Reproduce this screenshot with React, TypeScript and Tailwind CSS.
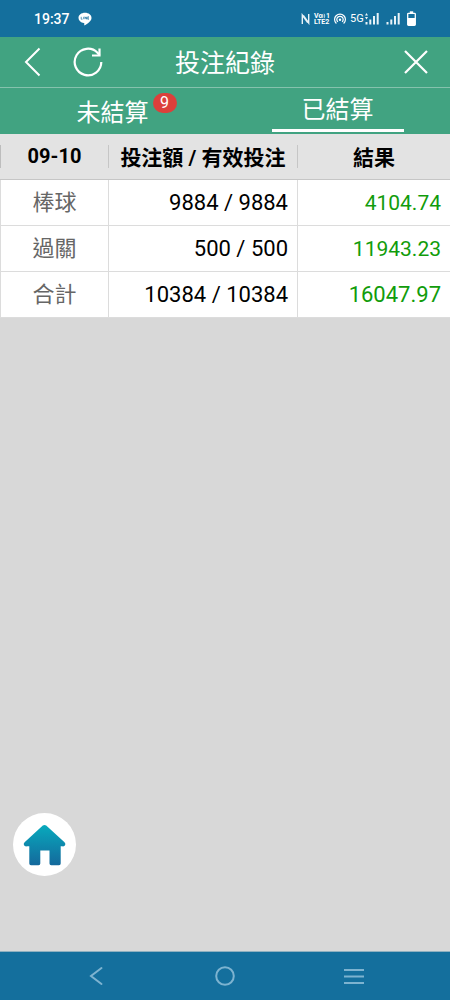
import { useState } from 'react'

interface BetRow {
    name: string
    stake: number
    valid: number
    result: string
    total?: boolean
}

const rows: BetRow[] = [
    { name: '棒球', stake: 9884, valid: 9884, result: '4104.74' },
    { name: '過關', stake: 500, valid: 500, result: '11943.23' },
    { name: '合計', stake: 10384, valid: 10384, result: '16047.97', total: true }
]

function StatusBar() {
    return (
        <div className="flex h-[37px] items-center justify-between bg-[#146f9d] pl-[34px] pr-[34px] text-white">
            <div className="flex items-center gap-2">
                <span className="text-[14px] leading-5 font-medium">19:37</span>
                <svg width="14" height="14" viewBox="0 0 14 14" aria-label="LINE">
                    <path d="M7 .8C3.3.8.5 3 .5 6c0 2.600 2.200 4.600 5.300 5 .5.1.6.4.5 1l-.1 1c0 .4.3.5.6.3 2.500-1.500 6.700-4.100 6.700-7.300C13.500 3 10.700.8 7 .8z" fill="#fff" />
                    <path d="M3.200 4.800v2.400h1.300M5.700 4.800v2.400M7 7.200V4.800l1.500 2.400V4.800M11 4.800H9.700v2.400H11M9.700 6H11" fill="none" stroke="#146f9d" strokeWidth=".7" />
                </svg>
            </div>
            <div className="flex items-center">
                <svg className="mr-1" width="9" height="12" viewBox="0 0 9 12" fill="none" stroke="#e8f3f8" strokeWidth="1.400">
                    <path d="M1.300 11V2l5.400 7.500M7.700 1v9L2.300 2.500" />
                </svg>
                <div className="mr-1 w-4 text-[7px] leading-[6px] font-bold">
                    <div className="flex items-center">
                        Vo
                        <svg width="4" height="6" viewBox="0 0 4 6" fill="none" stroke="#fff" strokeWidth=".8">
                            <path d="M.5 1q1.200 2 0 4M2.300.5q1.600 2.500 0 5" />
                        </svg>
                        1
                    </div>
                    <div>LTE2</div>
                </div>
                <svg className="mr-1" width="12" height="12" viewBox="0 0 12 12" fill="none" stroke="#fff" strokeWidth="1.200">
                    <path d="M2.400 10.500a5.400 5.400 0 1 1 7.200 0M3.900 8.900a3.200 3.200 0 1 1 4.200 0" />
                    <circle cx="6" cy="6.800" r="1.200" fill="#fff" stroke="none" />
                </svg>
                <span className="mr-0.5 w-[13px] text-[11px] leading-4">5G</span>
                <svg className="mr-[7px]" width="14" height="13" viewBox="0 0 14 13" fill="#e8f3f8">
                    <path d="M0 3.500 1.500 1 3 3.500zM0 5h3L1.500 7.500zM.5 10h2v2.500h-2zM4.300 7.500h2v5h-2zM8 4h2v8.500H8zM11.700 1h2v11.500h-2z" />
                </svg>
                <svg className="mr-[7px]" width="14" height="13" viewBox="0 0 14 13" fill="#e8f3f8">
                    <path d="M.5 10h2v2.500h-2zM4.300 7.500h2v5h-2zM8 4h2v8.500H8zM11.700 1h2v11.500h-2z" />
                </svg>
                <svg width="9" height="15" viewBox="0 0 9 15">
                    <path d="M2.800.3h3.400v1.900H2.800z" fill="#fff" />
                    <rect x=".7" y="2.300" width="7.600" height="12" rx=".8" fill="none" stroke="#fff" strokeWidth="1.300" />
                    <path d="M1 7h7v7H1z" fill="#fff" />
                </svg>
            </div>
        </div>
    )
}

function Header() {
    return (
        <header className="grid h-[51px] grid-cols-[1fr_auto_1fr] items-center border-b border-[#85c2ad] bg-[#41a381] text-white">
            <div className="flex items-center gap-[30px] pl-6">
                <button type="button" aria-label="返回">
                    <svg width="18" height="30" viewBox="0 0 18 30" fill="none" stroke="currentColor" strokeWidth="2">
                        <path d="M15.500 1.500 2 15l13.500 13.500" />
                    </svg>
                </button>
                <button type="button" aria-label="重新整理">
                    <svg width="32" height="30" viewBox="0 0 32 30" fill="none" stroke="currentColor" strokeWidth="2.200">
                        <path d="M29.300 15A13.300 13.300 0 1 1 25.500 5.700l2 2.300" />
                        <path d="M27.500 1.500v7h-7.500" />
                    </svg>
                </button>
            </div>
            <h1 className="pt-1 text-[25px] leading-8">投注紀錄</h1>
            <button type="button" aria-label="關閉" className="mr-[21px] justify-self-end">
                <svg width="26" height="26" viewBox="0 0 26 26" fill="none" stroke="currentColor" strokeWidth="2.200">
                    <path d="m2 2 22 22M24 2 2 24" />
                </svg>
            </button>
        </header>
    )
}

const tabs = [
    { id: 'open', label: '未結算', count: 9 },
    { id: 'settled', label: '已結算', count: 0 }
]

export default function App() {
    const [tab, setTab] = useState('settled')

    return (
        <div className="flex min-h-screen flex-col bg-[#d8d8d8] font-[Roboto,'Noto_Sans_CJK_TC',sans-serif]">
            <StatusBar />
            <Header />

            {/* Tabs */}
            <nav className="grid h-[46px] grid-cols-2 bg-[#41a381] text-white">
                {tabs.map((t) => (
                    <button
                        key={t.id}
                        type="button"
                        onClick={() => setTab(t.id)}
                        className="flex items-center justify-center text-2xl leading-8"
                    >
                        <span
                            className={
                                tab === t.id
                                    ? 'flex h-[42px] w-[132px] items-center justify-center border-b-[3px] border-white'
                                    : 'relative pt-1'
                            }
                        >
                            {t.label}
                            {t.count > 0 && (
                                <span className="absolute top-0 left-full ml-1 h-5 w-6 rounded-full bg-[#dc403b] text-center text-base leading-5">
                                    {t.count}
                                </span>
                            )}
                        </span>
                    </button>
                ))}
            </nav>

            {/* Bets */}
            <table className="w-full table-fixed border-separate border-spacing-0">
                <thead className="bg-[#e3e3e3] text-[21px] font-bold text-black">
                    <tr className="h-[46px]">
                        <th className="w-[24%] border-b border-[#c6c6c6] p-0">
                            <div className="h-[23px] border-l border-[#bdbdbd] text-[20px] leading-[23px]">09-10</div>
                        </th>
                        <th className="w-[42%] border-b border-[#c6c6c6] p-0">
                            <div className="h-[23px] border-l border-[#c6c6c6] leading-[27px] whitespace-nowrap">投注額 / 有效投注</div>
                        </th>
                        <th className="border-b border-[#c6c6c6] p-0">
                            <div className="h-[23px] border-l border-[#c6c6c6] leading-[27px]">結果</div>
                        </th>
                    </tr>
                </thead>
                <tbody className="bg-white text-[22px] leading-8">
                    {rows.map((row) => (
                        <tr key={row.name} className="h-[46px]">
                            <td className="border-b border-l border-[#dcdcdc] p-0 text-center text-[#666]">{row.name}</td>
                            <td className="border-b border-l border-[#dcdcdc] p-0 pr-[9px] text-right text-black">
                                {row.stake} / {row.valid}
                            </td>
                            <td
                                className={
                                    row.total
                                        ? 'border-b border-l border-[#dcdcdc] p-0 pr-[9px] text-right text-[#119c0b]'
                                        : 'border-b border-l border-[#dcdcdc] p-0 pr-[9px] text-right text-[21px] text-[#119c0b]'
                                }
                            >
                                {row.result}
                            </td>
                        </tr>
                    ))}
                </tbody>
            </table>

            {/* Home shortcut */}
            <a
                href="#home"
                aria-label="首頁"
                className="fixed bottom-[124px] left-[13px] flex h-[63px] w-[63px] items-center justify-center rounded-full bg-white"
            >
                <svg width="43" height="42" viewBox="0 0 43 42">
                    <defs>
                        <linearGradient id="roof" x1="0" y1="0" x2="0" y2="1">
                            <stop offset="0" stopColor="#08aabd" />
                            <stop offset="1" stopColor="#14699c" />
                        </linearGradient>
                    </defs>
                    <path
                        d="M19.800 1.600q1.700-1.400 3.400 0L41.500 18.300q1.400 1.600.6 3-1 1.500-3 1h-1.400V39.500q0 1.700-1.700 1.700h-7.800q-1.700 0-1.700-1.700V26.500h-9.200v13q0 1.700-1.700 1.700H8q-1.700 0-1.700-1.700V22.300H4q-2 .5-3-1-.8-1.400.6-3z"
                        fill="url(#roof)"
                    />
                </svg>
            </a>

            {/* System navigation */}
            <nav className="mt-auto flex h-[49px] items-center justify-center gap-[109px] border-t border-[#8fb0c0] bg-[#146f9d] text-[#7db3d0]">
                <button type="button" aria-label="上一頁" className="flex w-5 justify-center">
                    <svg width="14" height="20" viewBox="0 0 14 20" fill="none" stroke="currentColor" strokeWidth="2">
                        <path d="M12.500 2 2 10l10.500 8" strokeLinecap="round" />
                    </svg>
                </button>
                <button type="button" aria-label="主畫面">
                    <svg width="20" height="20" viewBox="0 0 20 20" fill="none" stroke="currentColor" strokeWidth="2">
                        <circle cx="10" cy="10" r="8.800" />
                    </svg>
                </button>
                <button type="button" aria-label="最近使用">
                    <svg width="20" height="18" viewBox="0 0 20 18" fill="none" stroke="currentColor" strokeWidth="2">
                        <path d="M0 3h20M0 9.500h20M0 16h20" />
                    </svg>
                </button>
            </nav>
        </div>
    )
}
